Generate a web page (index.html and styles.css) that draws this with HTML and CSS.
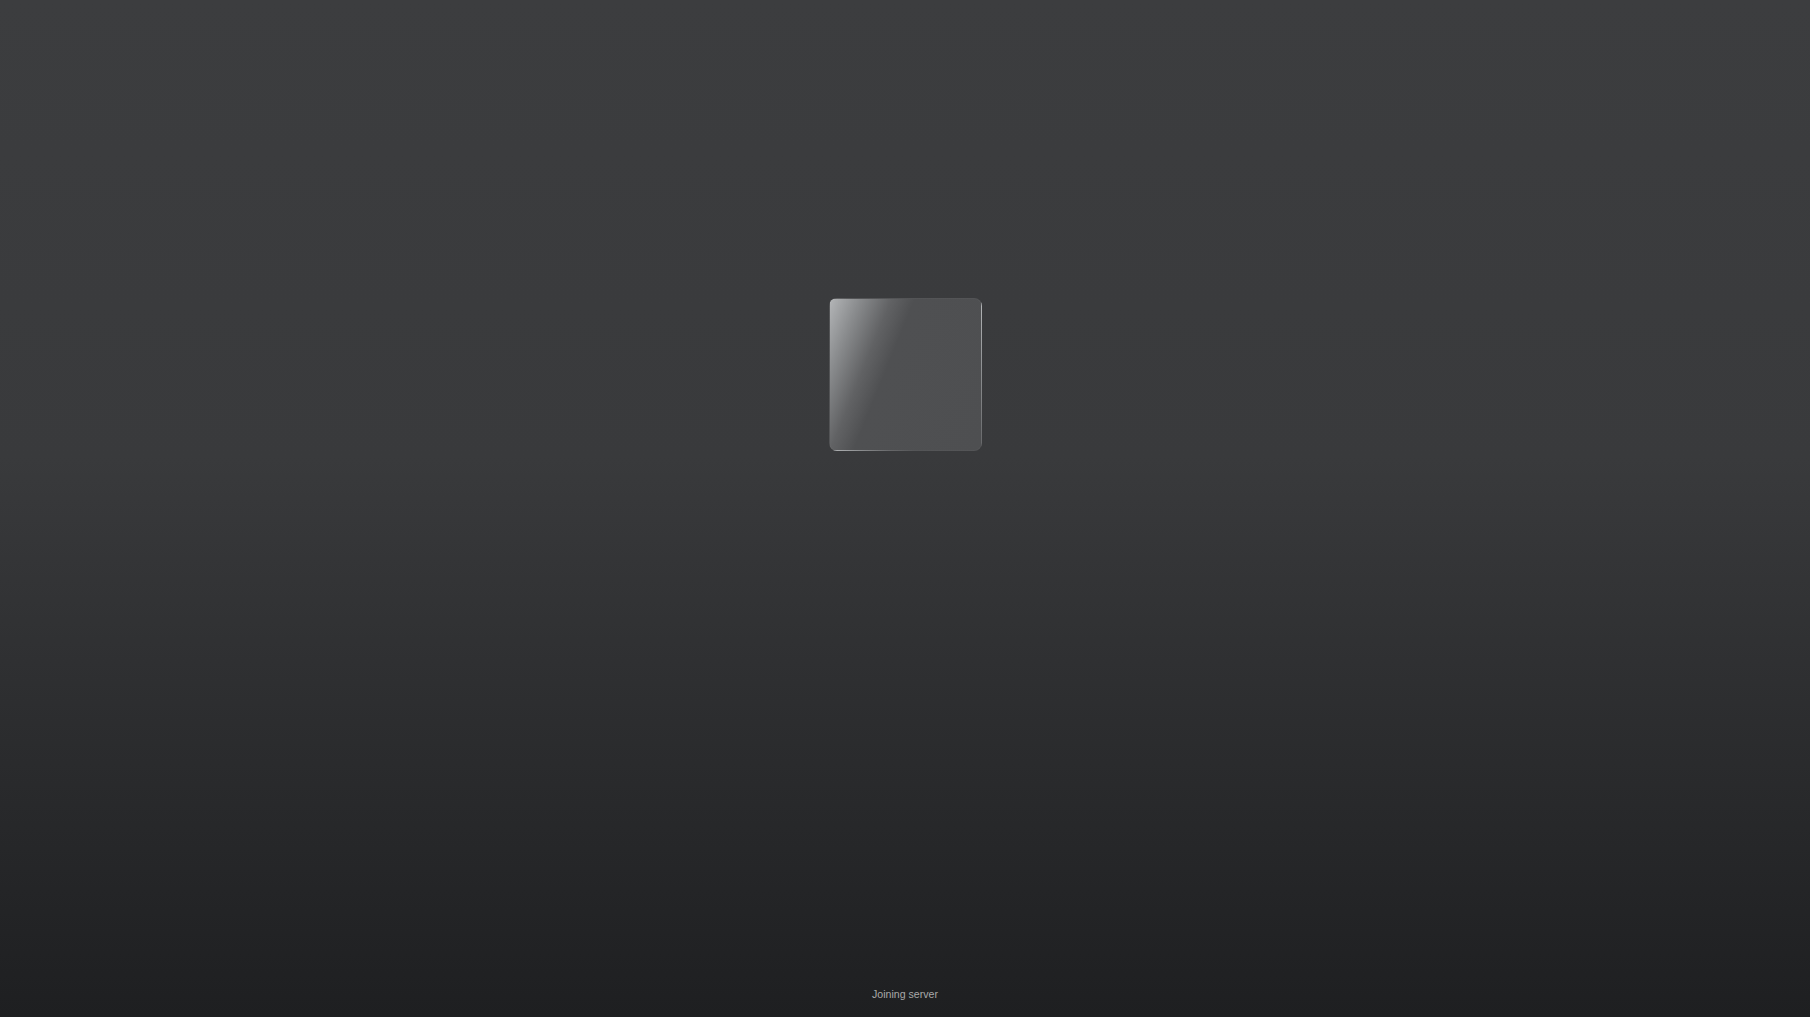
FILE: index.html
```html
<!DOCTYPE html>
<html>
<head>
<meta charset="utf-8">
<link rel="stylesheet" href="styles.css">
</head>
<body>
<div class="screen">
  <div class="tile"></div>
  <div class="spacer"></div>
  <div class="status">Joining server</div>
</div>
</body>
</html>
```
FILE: styles.css
```css
html, body {
  margin: 0;
  padding: 0;
  height: 100%;
}
body {
  background: linear-gradient(to bottom, #3c3d3f 0%, #393a3c 45%, #2a2b2d 75%, #1e1f21 100%);
  font-family: "Liberation Sans", Arial, sans-serif;
}
.screen {
  height: 100vh;
  display: flex;
  flex-direction: column;
  align-items: center;
  padding-top: 298px;
  box-sizing: border-box;
}
.tile {
  width: 153px;
  height: 153px;
  border-radius: 8px;
  box-sizing: border-box;
  border: 1px solid rgba(255,255,255,0.03);
  background: linear-gradient(112deg, #b3b5b7 0%, #8a8c8e 14%, #616264 29%, #4f5052 40%, #4e4f51 100%);
}
.spacer {
  flex: 1;
}
.status {
  font-size: 10.6px;
  color: #a9a9a9;
  line-height: 14px;
  margin-bottom: 16px;
}
```
